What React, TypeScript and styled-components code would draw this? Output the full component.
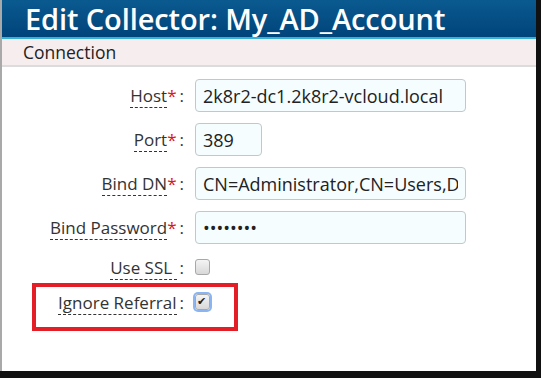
import React from 'react';
import styled, { createGlobalStyle } from 'styled-components';

const GlobalStyle = createGlobalStyle`
  html, body {
    margin: 0;
    padding: 0;
    background: #111111;
  }
  body {
    font-family: "Open Sans", "Liberation Sans", sans-serif;
  }
`;

const Screen = styled.div`
  width: 541px;
  height: 378px;
  background: #111111;
  overflow: hidden;
`;

const Frame = styled.div`
  width: 534px;
  height: 371px;
  background: #ffffff;
  border-left: 2px solid #a9a9a9;
  display: flex;
  flex-direction: column;
`;

const TitleBar = styled.div`
  height: 37px;
  background: linear-gradient(#0a5a90, #00447a);
  border-bottom: 2px solid #35b2d4;
  display: flex;
  align-items: center;
  padding-left: 23px;
`;

const Title = styled.h1`
  margin: 0;
  font-size: 29px;
  font-weight: 600;
  color: #ffffff;
  line-height: 37px;
  letter-spacing: -0.1px;
`;

const TabStrip = styled.div`
  height: 26px;
  background: #f6eeee;
  border-bottom: 2px solid #dcdcdc;
  display: flex;
  align-items: center;
  padding-left: 21px;
`;

const TabLabel = styled.span`
  font-size: 17.5px;
  color: #222222;
`;

const Form = styled.div`
  display: flex;
  flex-direction: column;
  gap: 11px;
  padding-top: 12px;
`;

const Row = styled.div<{ $compact?: boolean }>`
  position: relative;
  display: flex;
  align-items: center;
  gap: 12px;
  height: ${(p) => (p.$compact ? '24px' : '33px')};
`;

const Label = styled.label`
  width: 182px;
  text-align: right;
  font-size: 17px;
  color: #333333;
  white-space: nowrap;
`;

const LabelText = styled.span`
  border-bottom: 1px dashed #333333;
`;

const Required = styled.span`
  color: #e01010;
`;

const Colon = styled.span`
  margin-left: 3px;
`;

const TextInput = styled.input<{ $width: number }>`
  box-sizing: border-box;
  width: ${(p) => p.$width}px;
  height: 100%;
  margin: 0 0 0 -1px;
  padding: 0 7px;
  border: 1px solid #c2c8ca;
  border-radius: 4px;
  background: #f5fdff;
  font-family: "Open Sans", "Liberation Sans", sans-serif;
  font-size: 18px;
  color: #222222;
  outline: none;
`;

const Check = styled.input<{ $focused?: boolean }>`
  appearance: none;
  box-sizing: border-box;
  width: 15px;
  height: 16px;
  margin: 0 0 0 -1px;
  border: 1px solid #a8a8a8;
  border-radius: 3px;
  background: linear-gradient(#f4f4f4, #d8d8d8);
  position: relative;
  box-shadow: ${(p) => (p.$focused ? '0 0 0 2px #8ab4f2' : 'none')};

  &:checked::after {
    content: '✔';
    position: absolute;
    left: 1px;
    top: 0;
    font-family: "DejaVu Sans", sans-serif;
    font-size: 11px;
    line-height: 13px;
    color: #222222;
  }
`;

const Highlight = styled.div`
  position: absolute;
  left: 30px;
  top: -7px;
  width: 206px;
  height: 48px;
  box-sizing: border-box;
  border: 4px solid #e41e26;
  pointer-events: none;
`;

type FieldLabelProps = { text: string; required?: boolean };

function FieldLabel({ text, required }: FieldLabelProps) {
  return (
    <Label>
      <LabelText>{text}</LabelText>
      {required && <Required>*</Required>}
      <Colon>:</Colon>
    </Label>
  );
}

export default function App() {
  return (
    <Screen>
      <GlobalStyle />
      <Frame>
        <TitleBar>
          <Title>Edit Collector: My_AD_Account</Title>
        </TitleBar>
        <TabStrip>
          <TabLabel>Connection</TabLabel>
        </TabStrip>
        <Form>
          <Row>
            <FieldLabel text="Host" required />
            <TextInput $width={271} readOnly defaultValue="2k8r2-dc1.2k8r2-vcloud.local" />
          </Row>
          <Row>
            <FieldLabel text="Port" required />
            <TextInput $width={67} readOnly defaultValue="389" />
          </Row>
          <Row>
            <FieldLabel text="Bind DN" required />
            <TextInput $width={271} readOnly defaultValue="CN=Administrator,CN=Users,DC=2k8r2-vcloud,DC=local" />
          </Row>
          <Row>
            <FieldLabel text="Bind Password" required />
            <TextInput $width={271} type="password" readOnly defaultValue="password" />
          </Row>
          <Row $compact>
            <FieldLabel text="Use SSL " />
            <Check type="checkbox" readOnly />
          </Row>
          <Row $compact>
            <FieldLabel text="Ignore Referral" />
            <Check type="checkbox" $focused defaultChecked />
            <Highlight />
          </Row>
        </Form>
      </Frame>
    </Screen>
  );
}
